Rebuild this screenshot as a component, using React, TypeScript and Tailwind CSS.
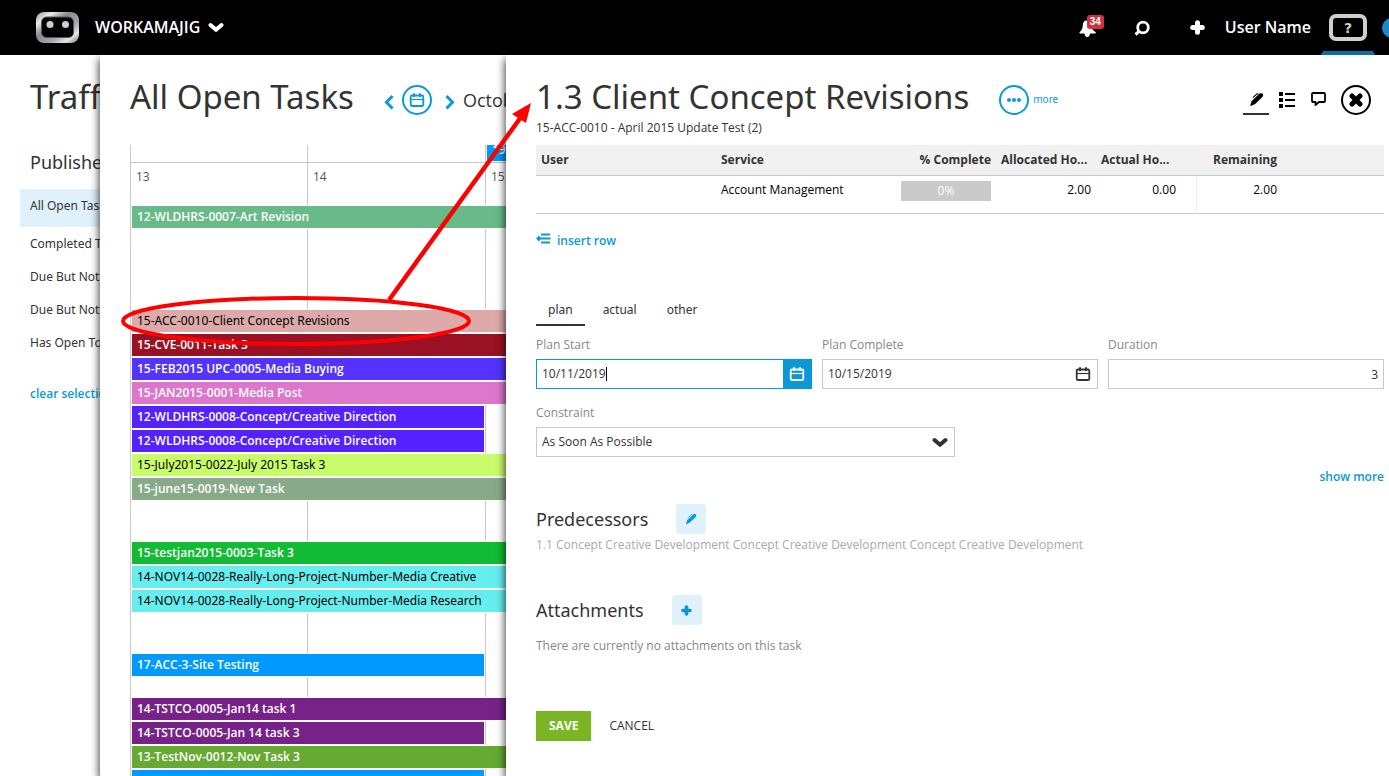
import { useState } from "react";
import type { ReactNode } from "react";

type Task = { name: string; color: string; light?: boolean; short?: boolean };

const weeks: { gap: string; tasks: Task[] }[] = [
  { gap: "pt-0", tasks: [{ name: "12-WLDHRS-0007-Art Revision", color: "bg-[#68bb88]" }] },
  {
    gap: "pt-20",
    tasks: [
      { name: "15-ACC-0010-Client Concept Revisions", color: "bg-[#dda9a9]", light: true },
      { name: "15-CVE-0011-Task 3", color: "bg-[#991122]" },
      { name: "15-FEB2015 UPC-0005-Media Buying", color: "bg-[#5533ff]" },
      { name: "15-JAN2015-0001-Media Post", color: "bg-[#dd77cc]" },
      { name: "12-WLDHRS-0008-Concept/Creative Direction", color: "bg-[#5522ff]", short: true },
      { name: "12-WLDHRS-0008-Concept/Creative Direction", color: "bg-[#5522ff]", short: true },
      { name: "15-July2015-0022-July 2015 Task 3", color: "bg-[#c8fc68]", light: true },
      { name: "15-june15-0019-New Task", color: "bg-[#88aa88]" },
    ],
  },
  {
    gap: "pt-10",
    tasks: [
      { name: "15-testjan2015-0003-Task 3", color: "bg-[#11bb33]" },
      { name: "14-NOV14-0028-Really-Long-Project-Number-Media Creative", color: "bg-[#66eeee]", light: true },
      { name: "14-NOV14-0028-Really-Long-Project-Number-Media Research", color: "bg-[#66eeee]", light: true },
    ],
  },
  { gap: "pt-10", tasks: [{ name: "17-ACC-3-Site Testing", color: "bg-[#0099ff]", short: true }] },
  {
    gap: "pt-5",
    tasks: [
      { name: "14-TSTCO-0005-Jan14 task 1", color: "bg-[#772288]" },
      { name: "14-TSTCO-0005-Jan 14 task 3", color: "bg-[#772288]", short: true },
      { name: "13-TestNov-0012-Nov Task 3", color: "bg-[#66aa33]" },
      { name: "", color: "bg-[#0099ff]", short: true },
    ],
  },
];

const filters = ["Completed Tasks", "Due But Not Started", "Due But Not Completed", "Has Open To Dos"];

function Logo() {
  return (
    <svg width="43" height="32" viewBox="0 0 43 32" aria-hidden="true">
      <defs>
        <linearGradient id="steel" x1="0" y1="0" x2="1" y2="1">
          <stop offset="0" stopColor="#8d8d90" />
          <stop offset="0.2" stopColor="#ececee" />
          <stop offset="0.4" stopColor="#8a8a8e" />
          <stop offset="0.65" stopColor="#a6a6aa" />
          <stop offset="0.82" stopColor="#e6e6e8" />
          <stop offset="1" stopColor="#6f6f73" />
        </linearGradient>
      </defs>
      <rect width="43" height="31" rx="8" fill="url(#steel)" />
      <rect x="5.5" y="5" width="32" height="20.5" rx="5" fill="#000" stroke="#58585c" />
      <circle cx="14" cy="12.5" r="3.5" fill="#cfcfcf" />
      <circle cx="29.5" cy="12.5" r="3.5" fill="#cfcfcf" />
    </svg>
  );
}

function Chevron({ className }: { className?: string }) {
  return (
    <svg width="16" height="11" viewBox="0 0 16 11" fill="none" stroke="currentColor" strokeWidth="4" strokeLinecap="round" strokeLinejoin="round" className={className} aria-hidden="true">
      <path d="M2.5 3 8 7.8 13.5 3" />
    </svg>
  );
}

function CalendarIcon() {
  return (
    <svg width="16" height="14" viewBox="0 0 16 14" fill="none" stroke="currentColor" aria-hidden="true">
      <rect x="1.7" y="2.5" width="12.6" height="10.5" rx="1.2" strokeWidth="1.8" />
      <path d="M1 6.5h14" strokeWidth="1.2" />
      <path d="M5 .3v3.7M11 .3v3.7" strokeWidth="2" />
    </svg>
  );
}

function PencilIcon({ size }: { size: number }) {
  return (
    <svg width={size} height={size} viewBox="0 0 16 16" fill="currentColor" aria-hidden="true">
      <path d="M1.2 15.3 2.7 9.8 10.6 2.2q1.2-1.3 3-.9 1.7.6 1.5 2.3-.1.9-1.1 1.9L6.6 12.7z" />
      <path d="M4.2 5.9 8.4 2l1.8.2" fill="none" stroke="currentColor" strokeWidth="1.1" />
    </svg>
  );
}

function PlusIcon({ size }: { size: number }) {
  return (
    <svg width={size} height={size} viewBox="0 0 15 15" fill="none" stroke="currentColor" strokeWidth="5" strokeLinecap="round" aria-hidden="true">
      <path d="M7.5 2.7v9.6M2.7 7.5h9.6" />
    </svg>
  );
}

function TopBar() {
  return (
    <header className="relative z-10 flex h-[55px] shrink-0 items-center bg-black pl-9 text-white">
      <a href="#home" aria-label="Home">
        <Logo />
      </a>
      <button type="button" className="ml-4 flex items-center gap-2 pb-px text-base font-semibold">
        WORKAMAJIG
        <Chevron />
      </button>
      <div className="-mr-[13px] ml-auto flex h-full items-center">
        <button type="button" aria-label="Notifications" className="relative">
          <svg width="18" height="18" viewBox="0 0 18 18" fill="currentColor" aria-hidden="true">
            <path d="M8 1.5c3.2 0 4.2 2 4.4 4.7.2 2.8.8 4.7 4.1 6.8.7.6.4 1.5-.6 1.5H1.3c-1 0-1.2-.9-.5-1.5 2.3-1.9 2.8-4 3-6.8C4 3.5 5 1.5 8 1.5z" />
            <path d="M5.5 14H11q-.2 4-2.7 4T5.5 14z" />
          </svg>
          <span className="absolute -top-1 left-2 h-[14px] rounded-[3px] bg-[#d0323f] px-[3px] font-['Liberation_Sans'] text-[10px] font-bold leading-[14px]">
            34
          </span>
        </button>
        <button type="button" aria-label="Search" className="ml-[37px]">
          <svg width="16" height="16" viewBox="0 0 16 16" fill="none" stroke="currentColor" aria-hidden="true">
            <circle cx="9" cy="7.5" r="5.3" strokeWidth="2.8" />
            <path d="m1.5 14.5 3.5-3" strokeWidth="3" />
          </svg>
        </button>
        <button type="button" aria-label="Add" className="ml-10">
          <PlusIcon size={15} />
        </button>
        <a href="#user" className="ml-5 pb-px text-base font-semibold">
          User Name
        </a>
        <button type="button" aria-label="Help" className="ml-[10px] flex h-full w-[54px] flex-col items-center justify-end">
          <span className="flex h-[27px] w-[38px] items-center justify-center rounded-[7px] border-4 border-[#cfcfcf] font-['DejaVu_Sans'] text-sm font-bold text-[#cfcfcf]">
            ?
          </span>
          <svg width="54" height="4" viewBox="0 0 54 4" className="mt-[10px]" aria-hidden="true">
            <path d="M2 0h50l2 4H0z" fill="#0a6fa5" />
          </svg>
        </button>
        <span className="ml-[7px] size-5 rounded-full bg-[#1b87cc]" />
      </div>
    </header>
  );
}

function FilterPanel() {
  return (
    <nav className="w-[100px] shrink-0 overflow-hidden whitespace-nowrap pt-6">
      <h1 className="ml-[30px] font-['Noto_Sans'] text-[33px] leading-9">Traffic</h1>
      <h2 className="ml-[30px] mt-[35px] font-['Noto_Sans'] text-lg leading-6">Published</h2>
      <ul className="mt-[15px] font-['Noto_Sans']">
        <li className="ml-5 bg-[#dff1fb] pb-1 pl-[10px] leading-[34px]">
          <a href="#all">All Open Tasks</a>
        </li>
        {filters.map((f) => (
          <li key={f} className="ml-[30px] leading-[33px]">
            <a href="#filter">{f}</a>
          </li>
        ))}
      </ul>
      <button type="button" className="ml-[30px] mt-[27px] font-semibold leading-4 text-[#0b99d6]">
        clear selection
      </button>
    </nav>
  );
}

function TaskBar({ task }: { task: Task }) {
  return (
    <div className={task.short ? "ml-px w-[354px] bg-white p-px" : "ml-px bg-white py-px pl-px"}>
      <div className={`h-[22px] pl-[5px] leading-[22px] ${task.color} ${task.light ? "font-['Noto_Sans'] text-black" : "font-semibold text-white"}`}>
        {task.name}
      </div>
    </div>
  );
}

function CalendarPanel() {
  return (
    <section className="relative w-[406px] shrink-0 overflow-hidden whitespace-nowrap bg-white pl-[30px] pt-6">
      <div className="flex items-end text-[#0b99d6]">
        <h1 className="font-['Noto_Sans'] text-[33px] leading-9 text-[#333]">All Open Tasks</h1>
        <div className="ml-auto flex w-[122px] shrink-0 items-center">
          <button type="button" aria-label="Previous month">
            <svg width="10" height="20" viewBox="0 0 10 20" fill="none" stroke="currentColor" strokeWidth="3" aria-hidden="true">
              <path d="m8.5 6-6 6.3 6 6.2" />
            </svg>
          </button>
          <button type="button" aria-label="Pick a date" className="ml-2 flex size-[30px] shrink-0 items-center justify-center rounded-full border-2">
            <CalendarIcon />
          </button>
          <button type="button" aria-label="Next month" className="ml-[13px]">
            <svg width="10" height="20" viewBox="0 0 10 20" fill="none" stroke="currentColor" strokeWidth="3" aria-hidden="true">
              <path d="m1.5 6 6 6.3-6 6.2" />
            </svg>
          </button>
          <span className="ml-2 text-lg leading-6 text-[#333]">October 2019</span>
        </div>
      </div>

      <div className="mt-[30px] grid">
        {/* day columns, drawn under the bars */}
        <div className="col-start-1 row-start-1 grid grid-cols-[177px_178px_1fr] grid-rows-[17px_1fr]">
          <div className="border-l border-[#c8c8c8]" />
          <div className="border-l border-[#c8c8c8]" />
          <div className="flex items-end overflow-hidden border-l border-[#c8c8c8] pb-px pl-px">
            <div className="h-[22px] w-full bg-[#0099ff] pl-[5px] font-semibold leading-[22px] text-white">19</div>
          </div>
          <div className="border-l border-t border-[#c8c8c8]" />
          <div className="border-l border-t border-[#c8c8c8]" />
          <div className="border-l border-t border-[#c8c8c8]" />
        </div>
        <div className="col-start-1 row-start-1 pt-[18px]">
          <div className="grid h-[42px] grid-cols-[177px_178px_1fr] pl-[6px] leading-7 text-[#555]">
            <span>13</span>
            <span>14</span>
            <span>15</span>
          </div>
          {weeks.map((week, i) => (
            <div key={i} className={week.gap}>
              {week.tasks.map((task, j) => (
                <TaskBar key={j} task={task} />
              ))}
            </div>
          ))}
        </div>
      </div>
    </section>
  );
}

function Field({ id, label, children }: { id: string; label: string; children: ReactNode }) {
  return (
    <div>
      <label htmlFor={id} className="block leading-4 text-[#888]">
        {label}
      </label>
      <div className="relative mt-[6px]">{children}</div>
    </div>
  );
}

const tabs = ["plan", "actual", "other"];

function TaskPanel() {
  const [tab, setTab] = useState("plan");
  const [start, setStart] = useState("10/11/2019");
  const [complete, setComplete] = useState("10/15/2019");
  const [duration, setDuration] = useState("3");

  return (
    <section className="relative min-w-0 flex-1 bg-white pl-[30px] pr-[5px] pt-6 shadow-[-1px_4px_8px_0_rgba(0,0,0,0.75)]">
      <div className="flex items-end">
        <h1 className="font-['Noto_Sans'] text-[33px] leading-9">1.3 Client Concept Revisions</h1>
        <button type="button" className="ml-[30px] flex items-center gap-1 font-['Noto_Sans'] text-[10px] text-[#0b99d6]">
          <span className="flex size-[30px] items-center justify-center gap-px rounded-full border-2">
            <span className="size-1 rounded-full bg-[#0b99d6]" />
            <span className="size-1 rounded-full bg-[#0b99d6]" />
            <span className="size-1 rounded-full bg-[#0b99d6]" />
          </span>
          more
        </button>
        <div className="ml-auto flex h-[30px] items-center pr-[13px] text-black">
          <button type="button" aria-label="Edit" className="flex h-full w-[26px] items-center justify-center border-b-2 border-[#333]">
            <PencilIcon size={15} />
          </button>
          <button type="button" aria-label="List" className="ml-[10px]">
            <svg width="16" height="16" viewBox="0 0 16 16" fill="currentColor" aria-hidden="true">
              <path d="M0 0h4v4H0zM0 6h4v4H0zM0 12h4v4H0zM6 1h10v2H6zM6 7h10v2H6zM6 13h10v2H6z" />
            </svg>
          </button>
          <button type="button" aria-label="Comments" className="ml-4">
            <svg width="15" height="16" viewBox="0 0 15 16" fill="none" stroke="currentColor" strokeWidth="1.8" strokeLinejoin="round" aria-hidden="true">
              <path d="M2 1h11q1 0 1 1v7q0 1-1 1H8l-3.5 3V10H2q-1 0-1-1V2q0-1 1-1z" />
            </svg>
          </button>
          <button type="button" aria-label="Close" className="ml-[15px] flex size-[30px] items-center justify-center rounded-full border-2 border-black">
            <svg width="14" height="14" viewBox="0 0 14 14" fill="none" stroke="currentColor" strokeWidth="5" strokeLinecap="round" aria-hidden="true">
              <path d="m3 3 8 8M11 3l-8 8" />
            </svg>
          </button>
        </div>
      </div>
      <p className="mt-[5px] leading-4">15-ACC-0010 - April 2015 Update Test (2)</p>

      <table className="mt-[9px] w-full table-fixed border-separate border-spacing-0">
        <colgroup>
          <col className="w-[180px]" />
          <col className="w-[180px]" />
          <col className="w-[100px]" />
          <col className="w-[100px]" />
          <col className="w-[100px]" />
          <col className="w-[86px]" />
          <col />
        </colgroup>
        <thead>
          <tr className="h-[31px] bg-[#f1f1f1] text-left *:border-b *:border-b-[#c8c8c8] *:px-[5px] *:py-0 *:font-bold">
            <th>User</th>
            <th>Service</th>
            <th className="whitespace-nowrap text-right">% Complete</th>
            <th className="whitespace-nowrap">Allocated Ho...</th>
            <th className="whitespace-nowrap">Actual Ho...</th>
            <th className="text-right">Remaining</th>
            <th />
          </tr>
        </thead>
        <tbody>
          <tr className="h-[38px] text-black *:border-b *:border-b-[#c8c8c8] *:px-[5px] *:pb-0 *:pt-[5px] *:align-top">
            <td />
            <td className="leading-[18px]">Account Management</td>
            <td>
              <div className="h-5 bg-[#cacaca] text-center leading-5 text-white">0%</div>
            </td>
            <td className="text-right leading-[18px]">2.00</td>
            <td className="text-right leading-[18px]">
              <span className="pr-[15px]">0.00</span>
            </td>
            <td className="border-l border-l-[#eee] text-right leading-[18px]">2.00</td>
            <td />
          </tr>
        </tbody>
      </table>

      <button type="button" className="mt-[19px] flex items-start gap-[6px] font-semibold leading-4 text-[#0b99d6]">
        <svg width="15" height="12" viewBox="0 0 15 12" fill="none" stroke="currentColor" strokeWidth="1.8" aria-hidden="true">
          <path d="M5 1.5h9M1 5.5h13.5M5 9.5h9" />
          <path d="M0 5.5 3 2.5l2 3-2 3z" fill="currentColor" stroke="none" />
        </svg>
        insert row
      </button>

      <div className="mt-[47px] flex gap-[6px]">
        {tabs.map((name) => (
          <button
            key={name}
            type="button"
            onClick={() => setTab(name)}
            className={`h-[30px] border-b-2 px-3 font-['Noto_Sans'] ${tab === name ? "border-[#333]" : "border-transparent"}`}
          >
            {name}
          </button>
        ))}
      </div>

      <div className="mt-[11px] grid grid-cols-3 gap-[10px]">
        <Field id="plan-start" label="Plan Start">
          <div className="flex h-[30px] border border-[#0b99d6]">
            <input id="plan-start" value={start} onChange={(e) => setStart(e.target.value)} className="min-w-0 flex-1 px-[5px] outline-none" />
            <button type="button" aria-label="Choose start date" className="flex w-7 items-center justify-center bg-[#0b99d6] text-white">
              <CalendarIcon />
            </button>
          </div>
          <span className="absolute left-[70px] top-2 h-[14px] w-px bg-black" />
        </Field>
        <Field id="plan-complete" label="Plan Complete">
          <div className="flex h-[30px] border border-[#c8c8c8]">
            <input id="plan-complete" value={complete} onChange={(e) => setComplete(e.target.value)} className="min-w-0 flex-1 px-[5px] outline-none" />
            <button type="button" aria-label="Choose complete date" className="flex w-7 items-center justify-center">
              <CalendarIcon />
            </button>
          </div>
        </Field>
        <Field id="duration" label="Duration">
          <input id="duration" value={duration} onChange={(e) => setDuration(e.target.value)} className="block h-[30px] w-full border border-[#c8c8c8] px-[5px] text-right outline-none" />
        </Field>
      </div>
      <div className="mt-4 grid grid-cols-2 gap-[10px]">
        <Field id="constraint" label="Constraint">
          <select id="constraint" className="block h-[30px] w-full appearance-none border border-[#c8c8c8] px-[5px] outline-none">
            <option>As Soon As Possible</option>
            <option>As Late As Possible</option>
          </select>
          <Chevron className="pointer-events-none absolute right-[7px] top-[10px]" />
        </Field>
      </div>
      <div className="mt-3 text-right leading-4">
        <a href="#more" className="font-semibold text-[#0b99d6]">
          show more
        </a>
      </div>

      <div className="mt-[19px] flex items-center gap-7">
        <h2 className="font-['Noto_Sans'] text-lg">Predecessors</h2>
        <button type="button" aria-label="Edit predecessors" className="flex size-[30px] items-center justify-center rounded-[3px] bg-[#dff1fb] text-[#0b99d6]">
          <PencilIcon size={12} />
        </button>
      </div>
      <p className="mt-[3px] leading-4 text-[#aaa]">
        1.1 Concept Creative Development Concept Creative Development Concept Creative Development
      </p>

      <div className="mt-[42px] flex items-center gap-7">
        <h2 className="font-['Noto_Sans'] text-lg">Attachments</h2>
        <button type="button" aria-label="Add attachment" className="flex size-[30px] items-center justify-center rounded-[3px] bg-[#dff1fb] text-[#0b99d6]">
          <PlusIcon size={11} />
        </button>
      </div>
      <p className="mt-[13px] leading-4 text-[#888]">There are currently no attachments on this task</p>

      <div className="mt-[57px] flex h-[30px] items-stretch gap-[18px]">
        <button type="button" className="bg-[#7ab624] px-[13px] font-bold text-white">
          SAVE
        </button>
        <button type="button">CANCEL</button>
      </div>
    </section>
  );
}

export default function App() {
  return (
    <div className="relative flex h-screen flex-col overflow-hidden bg-white font-['Open_Sans',sans-serif] text-xs text-[#333]">
      <TopBar />
      <main className="flex min-h-0 flex-1 overflow-hidden">
        <FilterPanel />
        <div className="relative flex shadow-[-1px_4px_8px_0_rgba(0,0,0,0.75)]">
          <CalendarPanel />
        </div>
        <TaskPanel />
      </main>
      <svg width="560" height="360" viewBox="0 0 560 360" className="pointer-events-none absolute left-0 top-0 z-20" aria-hidden="true">
        <ellipse cx="296" cy="321" rx="173" ry="23" fill="none" stroke="#f00" strokeWidth="4" />
        <path d="M389 300 521 117" stroke="#f00" strokeWidth="4.5" />
        <path d="m531 103-19 11 14 9z" fill="#f00" />
      </svg>
    </div>
  );
}
